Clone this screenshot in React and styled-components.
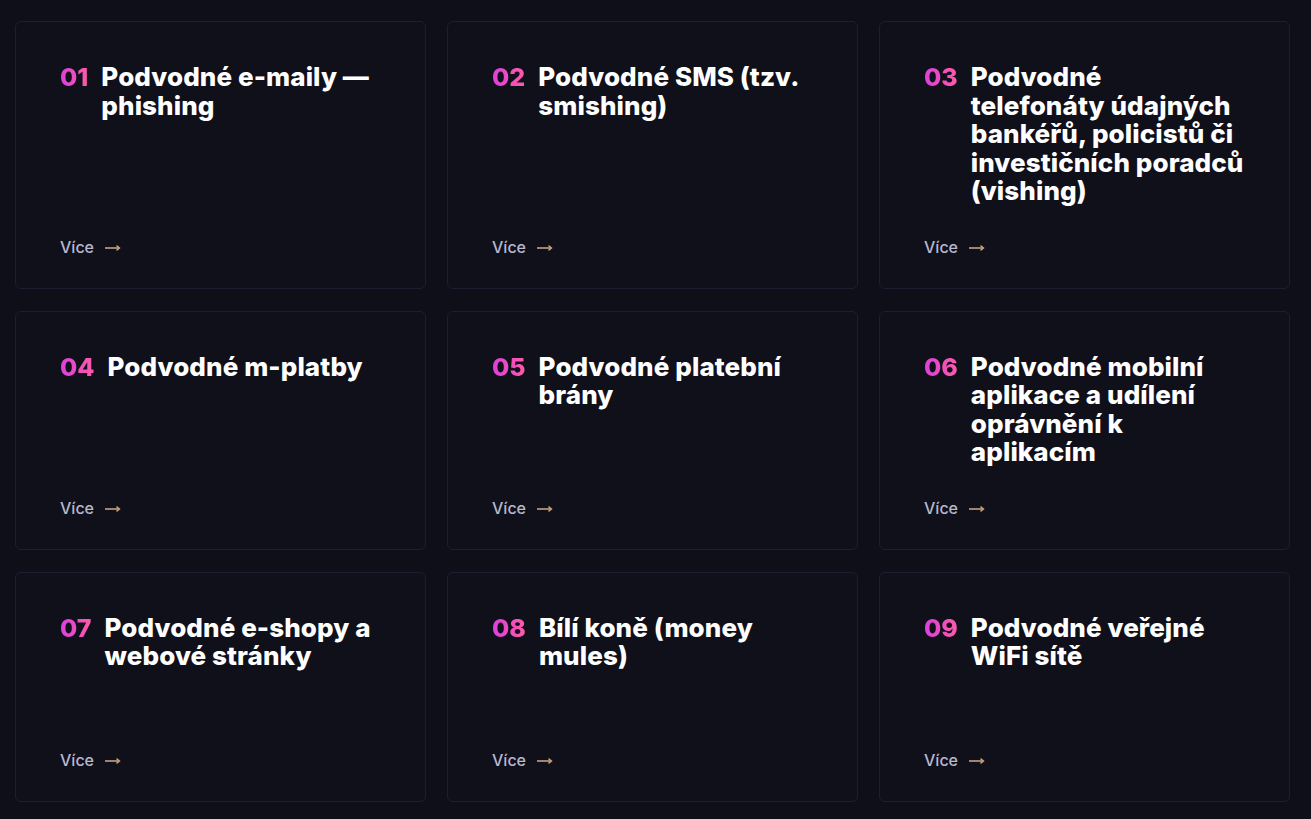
import React from "react";
import styled, { createGlobalStyle } from "styled-components";

const GlobalStyle = createGlobalStyle`
  html, body {
    margin: 0;
    padding: 0;
    background: #0f0f1a;
  }
  body {
    font-family: "Inter", "Noto Sans", sans-serif;
    -webkit-font-smoothing: antialiased;
  }
`;

const items = [
  "Podvodné e-maily — phishing",
  "Podvodné SMS (tzv. smishing)",
  "Podvodné\ntelefonáty údajných bankéřů, policistů či investičních poradců (vishing)",
  "Podvodné m-platby",
  "Podvodné platební brány",
  "Podvodné mobilní aplikace a udílení oprávnění k aplikacím",
  "Podvodné e-shopy a webové stránky",
  "Bílí koně (money mules)",
  "Podvodné veřejné WiFi sítě",
];

export default function App() {
  return (
    <>
      <GlobalStyle />
      <Grid>
        {items.map((title, i) => (
          <Card key={i} href="#">
            <Heading>
              <Num>{String(i + 1).padStart(2, "0")}</Num>
              <Title>{title}</Title>
            </Heading>
            <More>
              Více
              <Arrow width="16" height="8" viewBox="0 0 16 8">
                <path d="M0 4h14" stroke="currentColor" strokeWidth="1.6" />
                <path d="M11.5 1.6L14.5 4l-3 2.4" fill="none" stroke="currentColor" strokeWidth="1.4" />
              </Arrow>
            </More>
          </Card>
        ))}
      </Grid>
    </>
  );
}

const Grid = styled.div`
  display: grid;
  grid-template-columns: repeat(3, 1fr);
  column-gap: 21px;
  row-gap: 22px;
  padding: 21px 21px 18px 15px;
`;

const Card = styled.a`
  box-sizing: border-box;
  min-height: 230px;
  display: flex;
  flex-direction: column;
  justify-content: space-between;
  gap: 30px;
  padding: 41px 44px 30px;
  background: #10101b;
  border: 1px solid #1e1e30;
  border-radius: 6px;
  text-decoration: none;
`;

const Heading = styled.div`
  display: flex;
  align-items: flex-start;
  gap: 13px;
`;

const Num = styled.span`
  flex: none;
  font-size: 25px;
  line-height: 28.5px;
  font-weight: 800;
  background: linear-gradient(90deg, #dc3fdc 0%, #ff5aa8 100%);
  -webkit-background-clip: text;
  background-clip: text;
  color: transparent;
`;

const Title = styled.h3`
  flex: 1;
  margin: 0;
  white-space: pre-line;
  font-size: 26px;
  line-height: 28.5px;
  font-weight: 800;
  letter-spacing: 0.1px;
  color: #ffffff;
`;

const More = styled.span`
  display: flex;
  align-items: center;
  gap: 11px;
  height: 22px;
  font-size: 16px;
  font-weight: 500;
  color: #b8b8cf;
`;

const Arrow = styled.svg`
  color: #c9a181;
  margin-top: 3px;
`;
